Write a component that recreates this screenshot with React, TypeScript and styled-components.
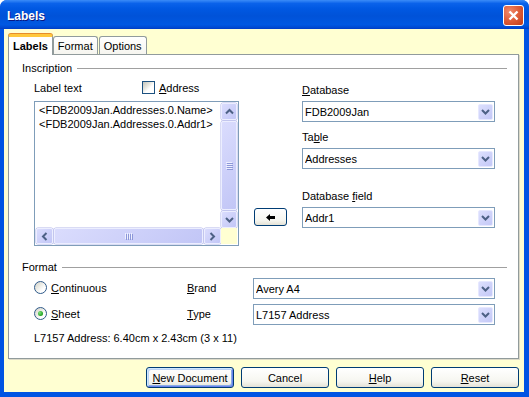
import React from 'react';
import styled, { createGlobalStyle, css } from 'styled-components';

const FACE = '#FFFFD2';

const GlobalStyle = createGlobalStyle`
  html, body {
    margin: 0;
    padding: 0;
    background: #ffffff;
  }
  body {
    font-family: 'Liberation Sans', Arial, sans-serif;
    font-size: 11px;
    color: #000;
  }
`;

const Window = styled.div`
  width: 529px;
  height: 397px;
  display: flex;
  flex-direction: column;
  background: #0054e3;
  border-radius: 7px 7px 0 0;
  overflow: hidden;
`;

const TitleBar = styled.div`
  flex: none;
  height: 29px;
  box-sizing: border-box;
  padding: 2px 5px 0 7px;
  display: flex;
  align-items: center;
  justify-content: space-between;
  background: linear-gradient(
    180deg,
    #3b8cf8 0%,
    #0a62ea 12%,
    #0058e2 30%,
    #0052d8 55%,
    #0058e2 85%,
    #0049d2 95%,
    #003cc4 100%
  );
`;

const Title = styled.span`
  font-weight: bold;
  font-size: 12px;
  color: #fff;
  text-shadow: 1px 1px 0 #0a1883;
`;

const CloseButton = styled.div`
  width: 21px;
  height: 21px;
  box-sizing: border-box;
  border: 1px solid #fff;
  border-radius: 3px;
  background: radial-gradient(circle at 30% 30%, #f08a6c 0%, #e0603c 45%, #c23a16 100%);
  display: flex;
  align-items: center;
  justify-content: center;
`;

const Client = styled.div`
  flex: 1;
  margin: 0 5px 5px 4px;
  padding: 5px 5px 4px 4px;
  background: ${FACE};
  display: flex;
  flex-direction: column;
`;

const TabStrip = styled.div`
  display: flex;
  align-items: flex-end;
  height: 21px;
  margin-bottom: -1px;
  position: relative;
  z-index: 1;
`;

const Tab = styled.div<{ $active?: boolean }>`
  box-sizing: border-box;
  display: flex;
  align-items: center;
  padding: 0 4px;
  border: 1px solid #919b9c;
  border-bottom: none;
  border-radius: 3px 3px 0 0;
  height: 18px;
  margin-bottom: 1px;
  background: linear-gradient(#ffffff, #f6f5ef);
  & + & {
    margin-left: 1px;
  }
  ${(p) =>
    p.$active &&
    css`
      height: 21px;
      margin-bottom: 0;
      margin-right: -1px;
      font-weight: bold;
      background: #fff;
      border-top: 3px solid #ffc83c;
      box-shadow: 0 -1px 0 #e68b2c;
    `}
`;

const Panel = styled.div`
  background: #fff;
  border: 1px solid #919b9c;
  box-shadow: 1px 1px 0 #dcdac8;
  padding: 6px 11px 13px 13px;
`;

const GroupTitle = styled.div<{ $spaced?: boolean }>`
  display: flex;
  align-items: center;
  gap: 5px;
  height: 14px;
  line-height: 14px;
  margin-top: ${(p) => (p.$spaced ? 14 : 0)}px;
  &::after {
    content: '';
    flex: 1;
    height: 1px;
    background: #a0a0a0;
  }
`;

const InscriptionGrid = styled.div`
  display: grid;
  grid-template-columns: 205px 33px 193px;
  grid-template-rows: 20px 21px 26px 21px 38px 21px 18px;
  grid-template-areas:
    'text .     dblabel'
    'box  .     db'
    'box  .     tbllabel'
    'box  .     tbl'
    'box  .     fldlabel'
    'box  arrow fld'
    'box  .     .';
  column-gap: 15px;
  margin-top: 6px;
  padding-left: 12px;
`;

const FormatGrid = styled.div`
  display: grid;
  grid-template-columns: 153px 66px 242px;
  grid-template-rows: 21px 21px;
  grid-template-areas:
    'cont  brandlabel brand'
    'sheet typelabel  type';
  row-gap: 5px;
  margin-top: 4px;
  padding-left: 12px;
`;

const FieldLabel = styled.div<{ $area: string }>`
  grid-area: ${(p) => p.$area};
  align-self: end;
  padding-bottom: 4px;
  line-height: 13px;
  white-space: nowrap;
`;

const InlineLabel = styled(FieldLabel)`
  align-self: center;
  padding-bottom: 0;
`;

const LabelTextRow = styled.div`
  grid-area: text;
  display: flex;
  align-items: center;
  height: 13px;
  white-space: nowrap;
`;

const LabelCaption = styled.span`
  width: 108px;
`;

const CheckOption = styled.label`
  display: flex;
  align-items: center;
  gap: 4px;
`;

const CheckBox = styled.span`
  width: 13px;
  height: 13px;
  box-sizing: border-box;
  border: 1px solid #1c5180;
  background: linear-gradient(135deg, #c4c4bc 0%, #e4e4dc 35%, #ffffff 60%);
`;

const Combo = styled.div<{ $area: string }>`
  grid-area: ${(p) => p.$area};
  box-sizing: border-box;
  height: 21px;
  border: 1px solid #7f9db9;
  background: #fff;
  display: flex;
  align-items: center;
  padding: 0 1px 0 2px;
`;

const ComboText = styled.span`
  flex: 1;
  white-space: nowrap;
  overflow: hidden;
`;

const DropButton = styled.span`
  width: 15px;
  height: 16px;
  box-sizing: border-box;
  border: 1px solid #e6e8ff;
  border-radius: 2px;
  background: linear-gradient(135deg, #dcdffd 0%, #c4c8f7 100%);
  display: flex;
  align-items: center;
  justify-content: center;
`;

const LabelBox = styled.div`
  grid-area: box;
  box-sizing: border-box;
  border: 1px solid #7f9db9;
  background: #fff;
  padding: 1px;
  display: grid;
  grid-template-columns: 1fr 16px;
  grid-template-rows: 1fr 16px;
  min-height: 0;
`;

const LabelLines = styled.div`
  padding: 0 3px;
  line-height: 14px;
  white-space: nowrap;
  overflow: hidden;
`;

const ScrollTrack = styled.div<{ $vertical?: boolean }>`
  display: flex;
  flex-direction: ${(p) => (p.$vertical ? 'column' : 'row')};
  background: #f0f0fd;
  min-width: 0;
  min-height: 0;
`;

const scrollFace = css`
  box-sizing: border-box;
  border: 1px solid #eceeff;
  border-radius: 2px;
  background: linear-gradient(135deg, #dadcfd 0%, #c2c6f6 100%);
  box-shadow: 0 0 0 0.5px #b4b8ea;
  display: flex;
  align-items: center;
  justify-content: center;
`;

const ScrollButton = styled.div<{ $vertical?: boolean }>`
  ${scrollFace};
  flex: none;
  width: ${(p) => (p.$vertical ? 16 : 17)}px;
  height: ${(p) => (p.$vertical ? 17 : 16)}px;
`;

const Thumb = styled.div`
  ${scrollFace};
  flex: 1;
  margin: 1px 0;
`;

const HThumb = styled(Thumb)`
  margin: 0 1px;
`;

const Corner = styled.div`
  background: ${FACE};
`;

const PushButton = styled.button<{ $default?: boolean }>`
  box-sizing: border-box;
  width: 88px;
  height: 21px;
  padding: 0;
  border: 1px solid #003c74;
  border-radius: 3px;
  background: linear-gradient(#ffffff 0%, #f6f6f0 70%, #e4e2d6 100%);
  font-family: 'Liberation Sans', Arial, sans-serif;
  font-size: 11px;
  color: #000;
  display: flex;
  align-items: center;
  justify-content: center;
  ${(p) =>
    p.$default &&
    css`
      box-shadow: inset 1px 1px 0 #cee7ff, inset -1px -1px 0 #6982ee, inset 2px 2px 0 #bcd4f6,
        inset -2px -2px 0 #89ade4;
    `}
`;

const ArrowButton = styled(PushButton)`
  grid-area: arrow;
  width: 33px;
  height: 18px;
  margin-top: 1px;
  align-self: start;
`;

const RadioOption = styled.label<{ $area: string }>`
  grid-area: ${(p) => p.$area};
  align-self: start;
  margin-top: 3px;
  display: flex;
  align-items: center;
  gap: 4px;
`;

const Radio = styled.span<{ $checked?: boolean }>`
  width: 13px;
  height: 13px;
  box-sizing: border-box;
  border-radius: 50%;
  border: 1px solid #2f5a8a;
  background: linear-gradient(135deg, #d0d0c8 0%, #ececE6 40%, #ffffff 70%);
  display: flex;
  align-items: center;
  justify-content: center;
  &::after {
    content: '';
    display: ${(p) => (p.$checked ? 'block' : 'none')};
    width: 5px;
    height: 5px;
    border-radius: 50%;
    background: radial-gradient(circle at 35% 35%, #7ee27e 0%, #21a121 70%);
  }
`;

const Info = styled.div`
  margin-top: 6px;
  padding-left: 12px;
  line-height: 14px;
`;

const ButtonRow = styled.div`
  display: flex;
  justify-content: flex-end;
  gap: 7px;
  margin-top: 8px;
`;

type Dir = 'up' | 'down' | 'left' | 'right';

const chevronPaths: Record<Dir, string> = {
  up: 'M1 5.5 L4.5 2 L8 5.5',
  down: 'M1 2 L4.5 5.5 L8 2',
  left: 'M5.5 1 L2 4.5 L5.5 8',
  right: 'M1.5 1 L5 4.5 L1.5 8',
};

const Chevron = ({ dir }: { dir: Dir }) => {
  const vertical = dir === 'up' || dir === 'down';
  return (
    <svg width={vertical ? 9 : 7} height={vertical ? 7 : 9} viewBox={vertical ? '0 0 9 7' : '0 0 7 9'}>
      <path d={chevronPaths[dir]} fill="none" stroke="#4d6185" strokeWidth="2" />
    </svg>
  );
};

const Grip = ({ vertical }: { vertical?: boolean }) => (
  <svg width={vertical ? 7 : 8} height={vertical ? 8 : 7} viewBox={vertical ? '0 0 7 8' : '0 0 8 7'}>
    {[0, 2, 4, 6].map((o) =>
      vertical ? (
        <g key={o}>
          <rect x="0" y={o} width="6" height="1" fill="#eef0ff" />
          <rect x="1" y={o + 1} width="6" height="1" fill="#8c97d8" />
        </g>
      ) : (
        <g key={o}>
          <rect x={o} y="0" width="1" height="6" fill="#eef0ff" />
          <rect x={o + 1} y="1" width="1" height="6" fill="#8c97d8" />
        </g>
      ),
    )}
  </svg>
);

const DropDown = ({ area, value }: { area: string; value: string }) => (
  <Combo $area={area}>
    <ComboText>{value}</ComboText>
    <DropButton>
      <Chevron dir="down" />
    </DropButton>
  </Combo>
);

export default function App() {
  return (
    <>
      <GlobalStyle />
      <Window>
        <TitleBar>
          <Title>Labels</Title>
          <CloseButton>
            <svg width="11" height="11" viewBox="0 0 11 11">
              <path d="M1.5 1.5 L9.5 9.5 M9.5 1.5 L1.5 9.5" stroke="#fff" strokeWidth="2.4" />
            </svg>
          </CloseButton>
        </TitleBar>

        <Client>
          <TabStrip>
            <Tab $active>Labels</Tab>
            <Tab>Format</Tab>
            <Tab>Options</Tab>
          </TabStrip>

          <Panel>
            <GroupTitle>Inscription</GroupTitle>
            <InscriptionGrid>
              <LabelTextRow>
                <LabelCaption>Label text</LabelCaption>
                <CheckOption>
                  <CheckBox />
                  <span>
                    <u>A</u>ddress
                  </span>
                </CheckOption>
              </LabelTextRow>

              <LabelBox>
                <LabelLines>
                  &lt;FDB2009Jan.Addresses.0.Name&gt;
                  <br />
                  &lt;FDB2009Jan.Addresses.0.Addr1&gt;
                </LabelLines>
                <ScrollTrack $vertical>
                  <ScrollButton $vertical>
                    <Chevron dir="up" />
                  </ScrollButton>
                  <Thumb>
                    <Grip vertical />
                  </Thumb>
                  <ScrollButton $vertical>
                    <Chevron dir="down" />
                  </ScrollButton>
                </ScrollTrack>
                <ScrollTrack>
                  <ScrollButton>
                    <Chevron dir="left" />
                  </ScrollButton>
                  <HThumb>
                    <Grip />
                  </HThumb>
                  <ScrollButton>
                    <Chevron dir="right" />
                  </ScrollButton>
                </ScrollTrack>
                <Corner />
              </LabelBox>

              <FieldLabel $area="dblabel">
                <u>D</u>atabase
              </FieldLabel>
              <DropDown area="db" value="FDB2009Jan" />
              <FieldLabel $area="tbllabel">
                Ta<u>b</u>le
              </FieldLabel>
              <DropDown area="tbl" value="Addresses" />
              <FieldLabel $area="fldlabel">
                Database <u>f</u>ield
              </FieldLabel>
              <ArrowButton>
                <svg width="9" height="7" viewBox="0 0 9 7">
                  <path d="M0 3.5 L4 0 L4 2 L9 2 L9 5 L4 5 L4 7 Z" fill="#000" />
                </svg>
              </ArrowButton>
              <DropDown area="fld" value="Addr1" />
            </InscriptionGrid>

            <GroupTitle $spaced>Format</GroupTitle>
            <FormatGrid>
              <RadioOption $area="cont">
                <Radio />
                <span>
                  <u>C</u>ontinuous
                </span>
              </RadioOption>
              <InlineLabel $area="brandlabel">
                <u>B</u>rand
              </InlineLabel>
              <DropDown area="brand" value="Avery A4" />
              <RadioOption $area="sheet">
                <Radio $checked />
                <span>
                  <u>S</u>heet
                </span>
              </RadioOption>
              <InlineLabel $area="typelabel">
                <u>T</u>ype
              </InlineLabel>
              <DropDown area="type" value="L7157 Address" />
            </FormatGrid>
            <Info>L7157 Address: 6.40cm x 2.43cm (3 x 11)</Info>
          </Panel>

          <ButtonRow>
            <PushButton $default>
              <span>
                <u>N</u>ew Document
              </span>
            </PushButton>
            <PushButton>Cancel</PushButton>
            <PushButton>
              <span>
                <u>H</u>elp
              </span>
            </PushButton>
            <PushButton>
              <span>
                <u>R</u>eset
              </span>
            </PushButton>
          </ButtonRow>
        </Client>
      </Window>
    </>
  );
}
